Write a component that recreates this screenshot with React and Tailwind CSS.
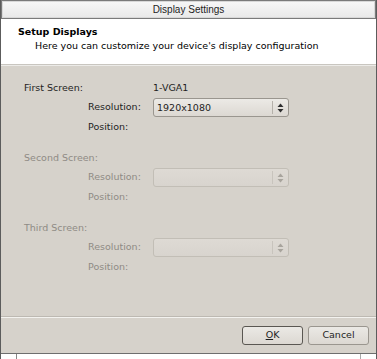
import React from "react";

const font = { fontFamily: '"DejaVu Sans", Verdana, sans-serif' };

function Arrows({ disabled }) {
  const c = disabled ? "#a8a49d" : "#2e2e2e";
  return (
    <svg width="7" height="10" viewBox="0 0 7 10">
      <path d="M3.5 0.5 L6.5 4 L0.5 4 Z" fill={c} />
      <path d="M3.5 9.5 L6.5 6 L0.5 6 Z" fill={c} />
    </svg>
  );
}

function Combo({ value, disabled }) {
  return (
    <div
      className={`w-[136px] h-[19px] rounded-[3px] border flex items-stretch ${
        disabled
          ? "border-[#c2beb6] bg-gradient-to-b from-[#dedad4] to-[#d8d4ce]"
          : "border-[#9a968f] bg-gradient-to-b from-[#eceae6] to-[#dcd8d2]"
      }`}
    >
      <div className="flex-1 flex items-center pl-[3px] text-[9.5px] text-[#1e1e1e] leading-none">
        {value}
      </div>
      <div
        className={`w-px my-[2px] ${disabled ? "bg-[#c8c4bd]" : "bg-[#b5b1aa]"}`}
      />
      <div className="w-[15px] flex items-center justify-center">
        <Arrows disabled={disabled} />
      </div>
    </div>
  );
}

function Section({ title, value, res, disabled, first }) {
  const tc = disabled ? "text-[#8f8b85]" : "text-[#1e1e1e]";
  return (
    <div className={`${first ? "" : "mt-[11px]"}`}>
      <div className={`h-[20px] flex items-center text-[9.5px] ${tc}`}>
        <div className="w-[129px]">{title}</div>
        <div>{value}</div>
      </div>
      <div className={`h-[19px] flex items-center text-[9.5px] ${tc}`}>
        <div className="w-[64px]" />
        <div className="w-[65px]">Resolution:</div>
        <Combo value={res} disabled={disabled} />
      </div>
      <div className={`h-[20px] flex items-center text-[9.5px] ${tc}`}>
        <div className="w-[64px]" />
        <div className="w-[65px]">Position:</div>
      </div>
    </div>
  );
}

export default function App() {
  return (
    <div
      className="w-[377px] h-[359px] bg-[#d6d2cb] flex flex-col border-l border-r border-[#5c5c5c] overflow-hidden"
      style={font}
    >
      {/* Title bar */}
      <div className="h-[19px] border-t border-b border-[#7a7a7a] bg-[#7a7a7a] flex flex-col">
        <div
          className="flex-1 mx-px bg-gradient-to-b from-[#f7f7f7] to-[#e9e9e9] border border-[#d8d8d8] flex items-center justify-center text-[10px] text-[#1e1e1e]"
          style={{ fontFamily: '"Liberation Sans", Arial, sans-serif' }}
        >
          Display Settings
        </div>
      </div>
      {/* Header */}
      <div className="h-[45px] bg-white pl-[17px] pt-[6px] text-[9.5px] text-black">
        <div className="font-bold leading-[13px]">Setup Displays</div>
        <div className="pl-[17px] leading-[13px] mt-[1px]">
          Here you can customize your device's display configuration
        </div>
      </div>
      <div className="h-px bg-[#c9c6c0]" />
      <div className="h-px bg-[#ecebe8]" />
      {/* Body */}
      <div className="flex-1 flex flex-col">
        <div className="pl-[23px] pt-[12px] flex-1">
          <Section title="First Screen:" value="1-VGA1" res="1920x1080" first />
          <Section title="Second Screen:" res="" disabled />
          <Section title="Third Screen:" res="" disabled />
        </div>
        <div className="h-px bg-[#bdb9b2]" />
        <div className="h-px bg-[#f3f2ef]" />
        <div className="h-[35px] flex items-center justify-end gap-[5px] pr-[7px] pb-[1px]">
          <button className="w-[61px] h-[19px] rounded-[3px] border border-[#5a5752] bg-gradient-to-b from-[#ebe9e5] to-[#dcd8d2] text-[9.5px] text-[#1e1e1e] leading-none">
            <span className="underline">O</span>K
          </button>
          <button className="w-[61px] h-[19px] rounded-[3px] border border-[#9a968f] bg-gradient-to-b from-[#ebe9e5] to-[#dcd8d2] text-[9.5px] text-[#1e1e1e] leading-none">
            Cancel
          </button>
        </div>
      </div>
      {/* Bottom strip */}
      <div className="h-px bg-[#6e6e6e]" />
      <div className="h-[5px] bg-white flex">
        <div className="w-[15px]" />
        <div className="w-px bg-[#888]" />
        <div className="flex-1" />
        <div className="w-px bg-[#aaa]" />
        <div className="w-[15px]" />
      </div>
    </div>
  );
}
